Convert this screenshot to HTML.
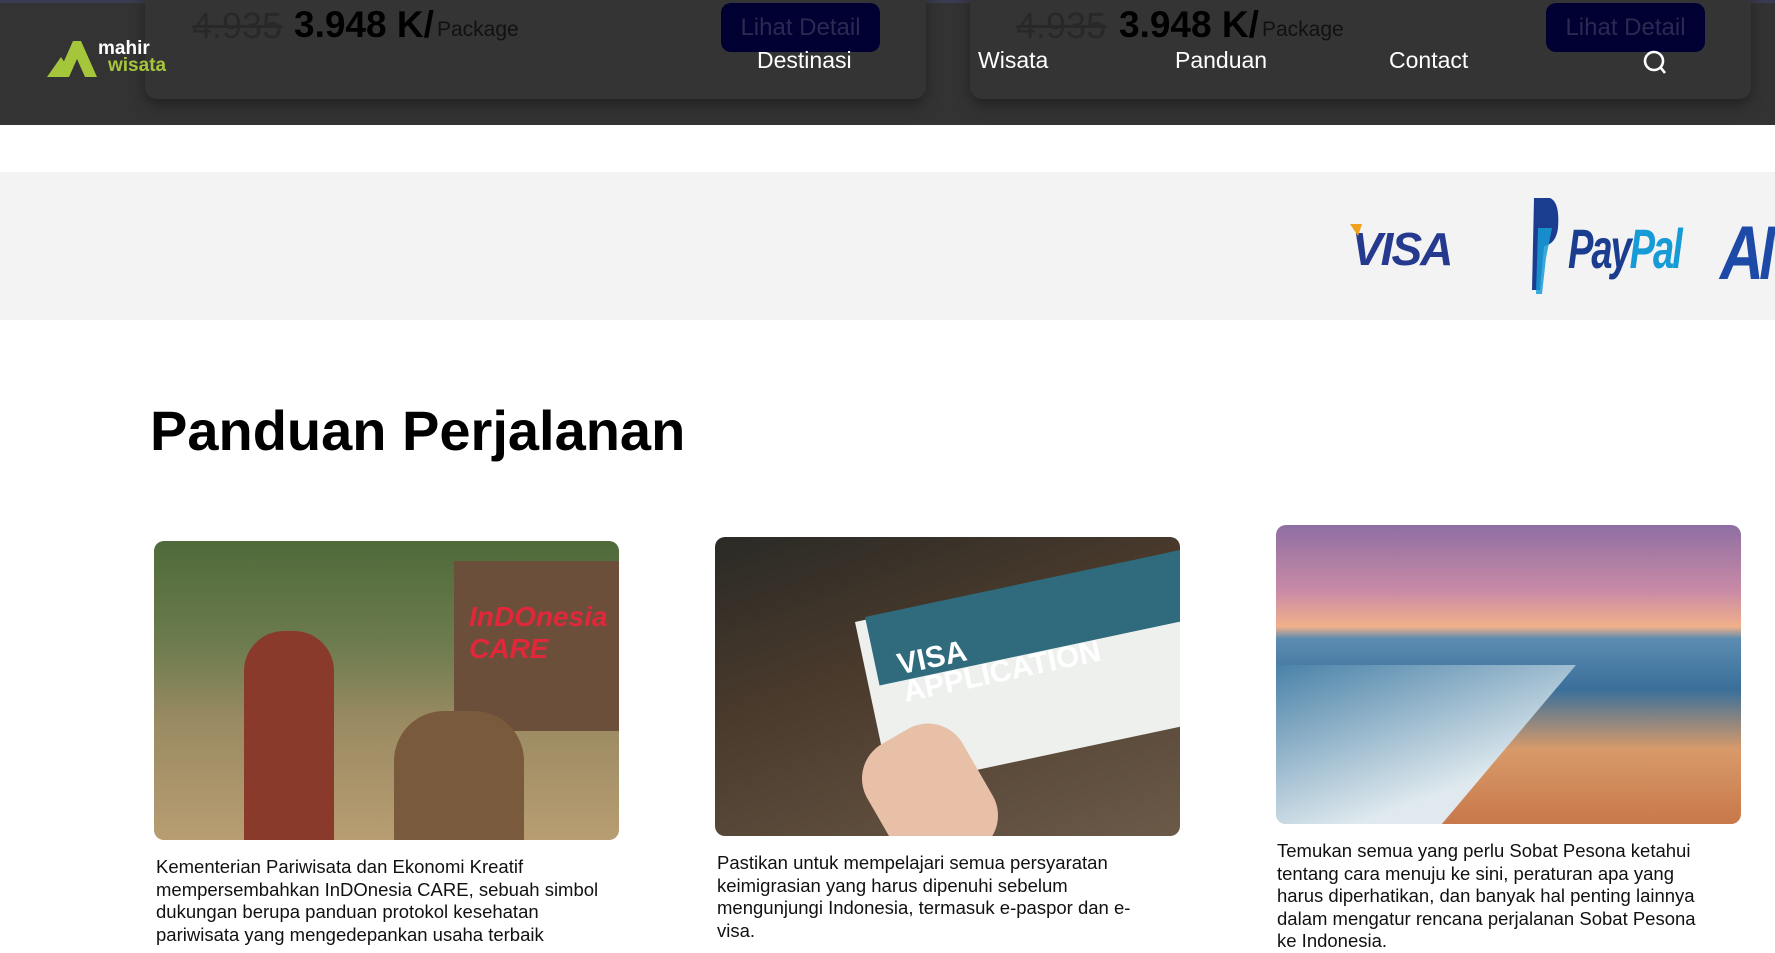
<!DOCTYPE html>
<html><head><meta charset="utf-8"><style>
*{margin:0;padding:0;box-sizing:border-box}
body{width:1775px;height:949px;overflow:hidden;background:#fff;font-family:"Liberation Sans",Arial,sans-serif;position:relative}
.abs{position:absolute}
header{position:absolute;left:0;top:0;width:1775px;height:125px;background:#333;border-top:3px solid #3a3a50}
.card{position:absolute;top:-20px;height:116px;background:#343434;border-radius:12px;box-shadow:0 6px 14px rgba(0,0,0,.35)}
.old{color:#282828;font-size:36px;text-decoration:line-through;top:2px}
.new{color:#000;font-size:37px;font-weight:bold;top:1px}
.pk{color:#111;font-size:21px;top:15px}
.btn{background:#000033;color:#2a2a50;font-size:24px;border-radius:10px;width:159px;height:49px;top:0px;text-align:center;line-height:50px}
.nav{color:#fff;font-size:23px;top:44px}
.band{position:absolute;left:0;top:172px;width:1775px;height:148px;background:#f3f3f3}
h1{position:absolute;left:150px;top:398px;font-size:56px;font-weight:bold;color:#000}
.img{position:absolute;width:465px;height:299px;border-radius:10px;overflow:hidden}
.txt{position:absolute;width:440px;font-size:18.5px;line-height:22.5px;color:#111}
</style></head><body>
<header>
 <div class="card" style="left:145px;width:781px"></div>
 <div class="card" style="left:970px;width:781px"></div>
 <div class="abs old" style="left:192px">4.935</div>
 <div class="abs new" style="left:294px">3.948 K/</div>
 <div class="abs pk" style="left:437px">Package</div>
 <div class="abs btn" style="left:721px">Lihat Detail</div>
 <div class="abs old" style="left:1016px">4.935</div>
 <div class="abs new" style="left:1119px">3.948 K/</div>
 <div class="abs pk" style="left:1262px">Package</div>
 <div class="abs btn" style="left:1546px">Lihat Detail</div>
 <svg class="abs" style="left:47px;top:36px" width="60" height="40" viewBox="0 0 60 40"><path d="M0 38 L14 18 L22 30 L14 38 Z" fill="#a5c63b"/><path d="M10 38 L26 2 L34 2 L50 38 L38 38 L30 20 L22 38 Z" fill="#a5c63b"/></svg>
 <div class="abs" style="left:98px;top:36px;color:#fff;font-weight:bold;font-size:19px;line-height:19px">mahir</div>
 <div class="abs" style="left:108px;top:53px;color:#a5c63b;font-weight:bold;font-size:19px;line-height:19px">wisata</div>
 <div class="abs nav" style="left:757px">Destinasi</div>
 <div class="abs nav" style="left:978px">Wisata</div>
 <div class="abs nav" style="left:1175px">Panduan</div>
 <div class="abs nav" style="left:1389px">Contact</div>
 <svg class="abs" style="left:1642px;top:46px" width="28" height="28" viewBox="0 0 28 28"><circle cx="12" cy="12" r="9" fill="none" stroke="#fff" stroke-width="2.6"/><path d="M19 19 L23 24" stroke="#fff" stroke-width="2.6"/></svg>
</header>
<div class="band">
 <div class="abs" style="left:1352px;top:50px;font-size:46px;font-weight:bold;font-style:italic;color:#253a8f;letter-spacing:-2px">VISA</div>
 <svg class="abs" style="left:1350px;top:52px" width="14" height="14"><path d="M0 0 L12 0 L8 12 Z" fill="#f0a01b"/></svg>
 <svg class="abs" style="left:1530px;top:26px" width="32" height="96" viewBox="0 0 32 96"><path d="M4 0 H20 Q30 4 28 30 Q26 46 14 48 L10 92 H2 Z" fill="#1a3d8f"/><path d="M8 30 H22 L16 60 L12 96 H6 Z" fill="#179bd7" opacity=".85"/></svg>
 <div class="abs" style="left:1568px;top:44px;font-size:56px;font-weight:bold;font-style:italic;color:#1a3d8f;letter-spacing:-3px;transform:scaleX(.68);transform-origin:left"><span>Pay</span><span style="color:#179bd7">Pal</span></div>
 <div class="abs" style="left:1720px;top:38px;font-size:76px;font-weight:bold;font-style:italic;color:#1d4aa6;letter-spacing:-6px;transform:scaleX(.8);transform-origin:left">AM</div>
</div>
<h1>Panduan Perjalanan</h1>
<div class="img" style="left:154px;top:541px;background:linear-gradient(180deg,#4f6a3a 0%,#6d7c4e 35%,#9a8a62 60%,#b89d72 100%)">
 <div class="abs" style="left:300px;top:20px;width:165px;height:170px;background:#6b4f3a"></div>
 <div class="abs" style="left:315px;top:60px;color:#e0283a;font-size:28px;font-style:italic;font-weight:bold">InDOnesia<br>CARE</div>
 <div class="abs" style="left:90px;top:90px;width:90px;height:209px;background:#8a3a2a;border-radius:40px 40px 0 0"></div>
 <div class="abs" style="left:240px;top:170px;width:130px;height:129px;background:#7a5a3c;border-radius:50px 50px 0 0"></div>
</div>
<div class="img" style="left:715px;top:537px;background:linear-gradient(160deg,#2a2a26 0%,#4a3a2c 40%,#6b5a48 100%)">
 <div class="abs" style="left:140px;top:85px;width:400px;height:170px;background:#eef0ee;transform:rotate(-12deg);transform-origin:left top"></div>
 <div class="abs" style="left:150px;top:80px;width:390px;height:70px;background:#2f6b7c;transform:rotate(-12deg);transform-origin:left top"></div>
 <div class="abs" style="left:180px;top:115px;color:#fff;font-size:30px;font-weight:bold;line-height:28px;transform:rotate(-12deg);transform-origin:left top">VISA<br>APPLICATION</div>
 <div class="abs" style="left:160px;top:190px;width:110px;height:140px;background:#e8c0a8;border-radius:40px;transform:rotate(-30deg)"></div>
</div>
<div class="img" style="left:1276px;top:525px;background:linear-gradient(180deg,#8e6fa3 0%,#c98aa6 22%,#f0b08a 34%,#5c8cb0 38%,#3a6f9a 55%,#d89a6a 75%,#c8784a 100%)">
 <div class="abs" style="left:0;top:140px;width:300px;height:160px;background:linear-gradient(160deg,#4a82a8,#dfe9ee 70%);clip-path:polygon(0 0,100% 0,55% 100%,0 100%)"></div>
</div>
<div class="txt" style="left:156px;top:856px;width:455px">Kementerian Pariwisata dan Ekonomi Kreatif mempersembahkan InDOnesia CARE, sebuah simbol dukungan berupa panduan protokol kesehatan pariwisata yang mengedepankan usaha terbaik</div>
<div class="txt" style="left:717px;top:852px">Pastikan untuk mempelajari semua persyaratan keimigrasian yang harus dipenuhi sebelum mengunjungi Indonesia, termasuk e-paspor dan e-visa.</div>
<div class="txt" style="left:1277px;top:840px">Temukan semua yang perlu Sobat Pesona ketahui tentang cara menuju ke sini, peraturan apa yang harus diperhatikan, dan banyak hal penting lainnya dalam mengatur rencana perjalanan Sobat Pesona ke Indonesia.</div>
</body></html>
